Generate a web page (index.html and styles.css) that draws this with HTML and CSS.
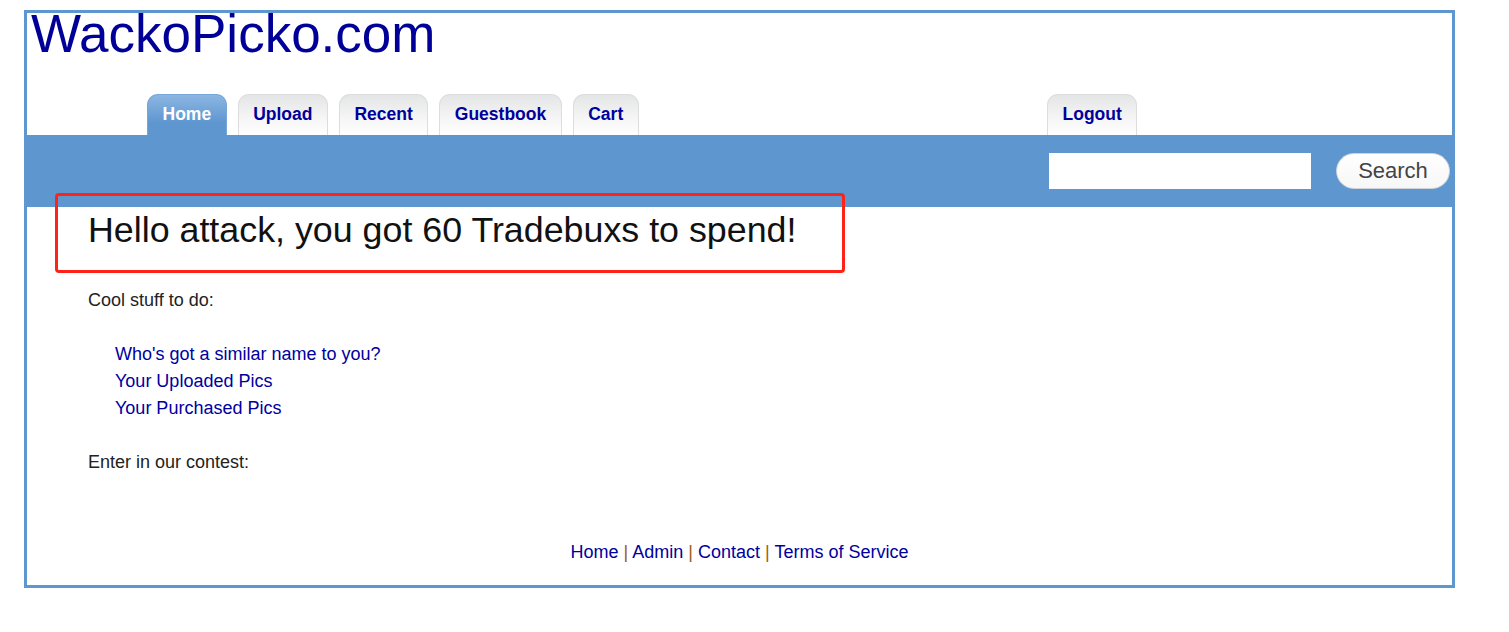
FILE: index.html
```html
<!DOCTYPE html>
<html>
<head>
<meta charset="utf-8">
<title>WackoPicko.com</title>
<link rel="stylesheet" href="styles.css">
</head>
<body>
<div class="page">
  <header class="header">
    <div class="logo">WackoPicko.com</div>
    <nav class="tabs">
      <ul class="tab-list tab-main">
        <li class="tab active"><a href="#">Home</a></li>
        <li class="tab"><a href="#">Upload</a></li>
        <li class="tab"><a href="#">Recent</a></li>
        <li class="tab"><a href="#">Guestbook</a></li>
        <li class="tab"><a href="#">Cart</a></li>
      </ul>
      <ul class="tab-list">
        <li class="tab"><a href="#">Logout</a></li>
      </ul>
    </nav>
  </header>
  <div class="searchbar">
    <input class="search-input" type="text">
    <button class="search-btn" type="button">Search</button>
  </div>
  <main class="content">
    <h1 class="hello">Hello attack, you got 60 Tradebuxs to spend!</h1>
    <p class="line">Cool stuff to do:</p>
    <ul class="links">
      <li><a href="#">Who's got a similar name to you?</a></li>
      <li><a href="#">Your Uploaded Pics</a></li>
      <li><a href="#">Your Purchased Pics</a></li>
    </ul>
    <p class="line">Enter in our contest:</p>
  </main>
  <footer class="footer">
    <a href="#">Home</a> <span class="sep">|</span> <a href="#">Admin</a> <span class="sep">|</span> <a href="#">Contact</a> <span class="sep">|</span> <a href="#">Terms of Service</a>
  </footer>
</div>
<div class="highlight"></div>
</body>
</html>
```

FILE: styles.css
```css
html, body {
  margin: 0;
  padding: 0;
  background: #ffffff;
}
body {
  font-family: "Liberation Sans", Arial, sans-serif;
  color: #1a1a1a;
  padding: 10px 0 0 24px;
}
a {
  color: #0000a0;
  text-decoration: none;
}
.page {
  width: 1425px;
  border: 3px solid #5e96d0;
}
.header {
  height: 122px;
  display: flex;
  flex-direction: column;
  justify-content: space-between;
}
.logo {
  font-size: 53px;
  line-height: 42px;
  color: #000099;
  padding-left: 4px;
}
.tabs {
  display: flex;
  padding-left: 120px;
}
.tab-list {
  list-style: none;
  margin: 0;
  padding: 0;
  display: flex;
  gap: 11px;
}
.tab-main {
  width: 900px;
}
.tab {
  height: 40px;
  border: 1px solid #dddddd;
  border-bottom: none;
  border-radius: 11px 11px 0 0;
  background: linear-gradient(#e4e5e6, #f6f6f6 60%, #ffffff);
}
.tab a {
  display: block;
  padding: 0 14.5px;
  line-height: 38px;
  font-size: 17.5px;
  font-weight: bold;
  color: #00009c;
}
.tab.active {
  border-color: #77a6d8;
  background: linear-gradient(#8cb6e2, #5e96d0 70%);
}
.tab.active a {
  color: #ffffff;
}
.searchbar {
  height: 72px;
  background: #5e96d0;
  display: flex;
  align-items: center;
  justify-content: flex-end;
  gap: 25px;
  padding-right: 2px;
}
.search-input {
  width: 262px;
  height: 36px;
  box-sizing: border-box;
  border: none;
  background: #ffffff;
  margin: 0;
  padding: 0 4px;
}
.search-btn {
  width: 114px;
  height: 36px;
  border: 1px solid #d0d4d8;
  border-radius: 18px;
  background: linear-gradient(#ffffff, #f7f7f7);
  font-family: "Liberation Sans", Arial, sans-serif;
  font-size: 22px;
  color: #444444;
  padding: 0;
  margin: 0;
}
.content {
  padding-left: 61px;
  font-size: 18px;
  line-height: 27px;
}
.hello {
  margin: 5px 0 39px;
  font-size: 35.8px;
  line-height: 36px;
  font-weight: normal;
  color: #111111;
}
.line {
  margin: 0;
  color: #222222;
}
.links {
  list-style: none;
  margin: 27px 0;
  padding-left: 27px;
}
.footer {
  margin-top: 63px;
  padding-bottom: 19px;
  text-align: center;
  font-size: 18px;
  line-height: 27px;
}
.sep {
  color: #9a5a18;
}
.highlight {
  position: absolute;
  left: 55px;
  top: 193px;
  width: 784px;
  height: 74px;
  border: 3px solid #ff2218;
  border-radius: 4px;
}
```
